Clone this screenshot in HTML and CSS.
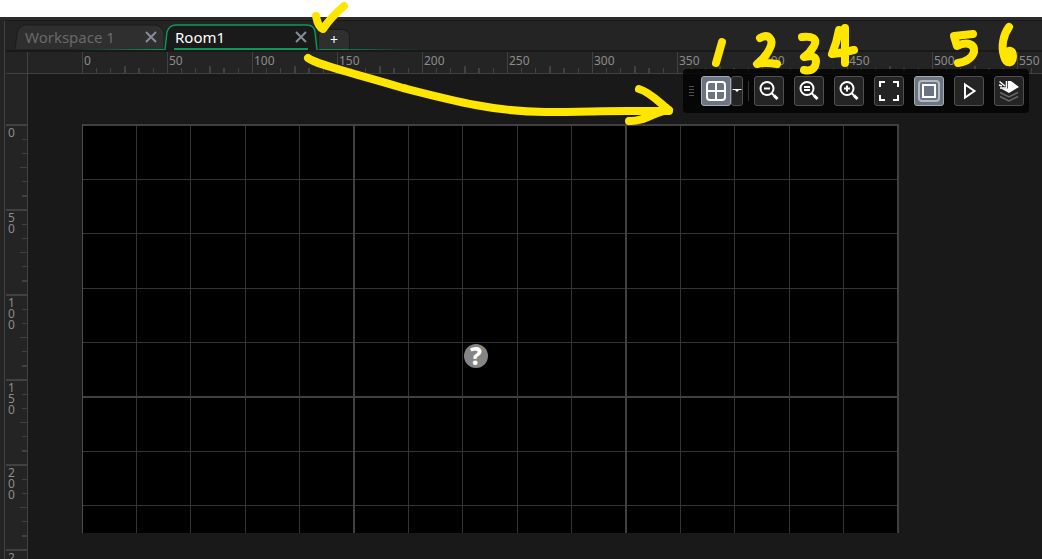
FILE: index.html
```html
<!DOCTYPE html>
<html lang="en">
<head>
<meta charset="utf-8">
<title>Room Editor</title>
<link rel="stylesheet" href="styles.css">
</head>
<body>
<div class="app">
  <div class="dock-edge"></div>
  <main class="workspace">
    <nav class="tabs" aria-label="Open documents">
      <div class="tab tab-idle">
        <svg class="tab-shape" viewBox="0 0 149 26" preserveAspectRatio="none" aria-hidden="true"><defs><linearGradient id="fade"><stop offset="0.4" stop-color="#0a9a58" stop-opacity="0"/><stop offset="1" stop-color="#0a9a58"/></linearGradient></defs><path d="M0 26L2 9Q4 1 11 1H139Q147 1 149 9V26Z" fill="#2f2f2f" stroke="#1a1a1a"/><rect y="25" width="149" height="1" fill="url(#fade)"/></svg>
        <button class="tab-label" type="button">Workspace 1</button>
        <button class="close" type="button" aria-label="Close Workspace 1"><svg viewBox="0 0 12 12"><path d="M1 1L11 11M11 1L1 11"/></svg></button>
      </div>
      <div class="tab tab-active">
        <svg class="tab-shape" viewBox="0 0 154 26" preserveAspectRatio="none" aria-hidden="true"><path d="M1 26L3 8Q5 1 12 1H143Q150 1 151 8L153 26" fill="#1a1a1a" stroke="#0a9a58" stroke-width="1.4"/><path d="M10 25H144" stroke="#0a9a58" stroke-width="2"/></svg>
        <button class="tab-label" type="button">Room1</button>
        <button class="close" type="button" aria-label="Close Room1"><svg viewBox="0 0 12 12"><path d="M1 1L11 11M11 1L1 11"/></svg></button>
      </div>
      <button class="add" type="button" aria-label="New workspace">+</button>
      <div class="tab-line"></div>
    </nav>
    <div class="ruler-top">
      <div class="ruler-corner"></div>
      <div class="ruler-x"><span>0</span><span>50</span><span>100</span><span>150</span><span>200</span><span>250</span><span>300</span><span>350</span><span>400</span><span>450</span><span>500</span><span>550</span></div>
    </div>
    <div class="stage">
      <div class="ruler-y"><span>0</span><span>50</span><span>100</span><span>150</span><span>200</span><span>250</span></div>
      <div class="room">
        <svg class="grid" viewBox="0 0 817 409" shape-rendering="crispEdges" role="img" aria-label="Room grid">
          <rect width="817" height="409" fill="#000"/>
          <path stroke="#343434" d="M54.5 0V409M108.5 0V409M163.5 0V409M217.5 0V409M326.5 0V409M380.5 0V409M435.5 0V409M489.5 0V409M598.5 0V409M652.5 0V409M707.5 0V409M761.5 0V409M0 55.5H817M0 109.5H817M0 164.5H817M0 218.5H817M0 327.5H817M0 381.5H817"/>
          <path stroke="#404040" stroke-width="2" d="M272 0V409M544 0V409M816 0V409M0 1H817M0 273H817"/>
          <path stroke="#4c4c4c" d="M.5 0V409"/>
        </svg>
        <span class="instance">?</span>
      </div>
    </div>
    <div class="toolbar" role="toolbar" aria-label="Room tools">
      <div class="grip"></div>
      <div class="split">
        <button class="tool on" type="button" aria-label="Toggle grid"><svg viewBox="0 0 30 30"><rect x="6" y="6" width="18" height="18" rx="3"/><path d="M15 6V24M6 15H24"/></svg></button>
        <button class="tool more" type="button" aria-label="Grid options"><svg viewBox="0 0 12 30"><path d="M1.500 13.500H10.500" stroke-width="1"/><path d="M3 13H9L6 16Z" fill="#fff" stroke="none"/></svg></button>
      </div>
      <div class="divider"></div>
      <div class="tools">
        <button class="tool" type="button" aria-label="Zoom out"><svg viewBox="0 0 30 30"><circle cx="13" cy="12.5" r="6.5"/><path d="M10 12.5H16M17.5 17L20 19.5"/><path d="M20 19.5L23.5 23" stroke-width="3"/></svg></button>
        <button class="tool" type="button" aria-label="Reset zoom"><svg viewBox="0 0 30 30"><circle cx="13" cy="12.5" r="6.5"/><path d="M10 11H16M10 14H16M17.5 17L20 19.5"/><path d="M20 19.5L23.5 23" stroke-width="3"/></svg></button>
        <button class="tool" type="button" aria-label="Zoom in"><svg viewBox="0 0 30 30"><circle cx="13" cy="12.5" r="6.5"/><path d="M10 12.5H16M13 9.5V15.5M17.5 17L20 19.5"/><path d="M20 19.5L23.5 23" stroke-width="3"/></svg></button>
        <button class="tool" type="button" aria-label="Fit to view"><svg viewBox="0 0 30 30" stroke-width="1.5"><path d="M11 6H6V11M19 6H24V11M6 19V24H11M24 19V24H19"/></svg></button>
        <button class="tool on" type="button" aria-label="Show frame"><svg viewBox="0 0 30 30"><rect x="5" y="5" width="20" height="20" rx="3" stroke="#b4bac4"/><rect x="9" y="9" width="12" height="12"/></svg></button>
        <button class="tool" type="button" aria-label="Play"><svg viewBox="0 0 30 30"><path d="M11 8.500L20.500 15L11 21.500Z"/></svg></button>
        <button class="tool" type="button" aria-label="Layers"><svg viewBox="0 0 30 30"><path d="M6 16.500L15 21L24 16.500M6 20.500L15 25L24 20.500" stroke="#686868" stroke-width="1.5"/><path d="M14 5L17 5L25 11L15 17L7 12.500L14 12.500Z" fill="#fff" stroke="none"/><path d="M5.500 5.500L11 10M12.500 5V12H6M5 9L8 10" stroke-width="1.5"/></svg></button>
      </div>
    </div>
  </main>
</div>
<svg class="marks" viewBox="0 0 1042 130" role="img" aria-label="Handwritten notes: an arrow to the toolbar, numbered 1 to 6">
  <path d="M316 16Q318 27 323 29Q331 17 344 6"/>
  <path d="M308 58C317 65 350 72 403 88C450 100 495 112 545 112C580 112 600 111 627 111H669M639 89C650 92 660 103 669 110C655 111 645 122 629 121"/>
  <path d="M722 42L716 63"/>
  <path d="M760 38C769 33 774 40 770 48C767 55 762 60 757 64Q765 62 777 64"/>
  <path d="M802 37C812 36 818 38 814 46Q810 53 804 57C817 54 817 60 815 66Q812 72 804 70"/>
  <path d="M839 30Q837 42 832 54Q842 53 854 50M845 28V63"/>
  <path d="M973 34L954 36L957 46C967 41 975 44 974 52Q971 61 958 63"/>
  <path d="M1009 27C1003 35 1001 47 1004 56C1006 64 1013 65 1013 56C1013 48 1006 50 1006 56"/>
</svg>
</body>
</html>
```
FILE: styles.css
```css
* { box-sizing: border-box; }
body {
  margin: 0;
  padding-top: 17px;
  height: 100vh;
  background: #fff;
  font-family: "Noto Sans", sans-serif;
  overflow: hidden;
  position: relative;
}
button { font: inherit; margin: 0; padding: 0; border: 0; background: none; color: inherit; }
.app {
  display: flex;
  height: 100%;
  background: #242424;
  border-top: 3px solid #2b2b2b;
  overflow: hidden;
}
.dock-edge { flex: none; width: 5px; margin-top: 1px; border-right: 1px solid #414141; }
.workspace {
  flex: 1;
  min-width: 0;
  display: flex;
  flex-direction: column;
  position: relative;
  border-top: 1px solid #191919;
  border-left: 1px solid #242424;
}
.tabs {
  flex: none;
  display: flex;
  align-items: flex-end;
  height: 31px;
  padding-left: 9px;
  border-bottom: 2px solid #191919;
}
.tab {
  position: relative;
  display: flex;
  align-items: center;
  justify-content: space-between;
  height: 26px;
  font-size: 15px;
}
.tab-idle { width: 149px; padding: 0 7px 0 10px; color: #696969; }
.tab-active { width: 154px; padding: 0 11px 0 11px; color: #fff; }
.tab-shape { position: absolute; left: 0; top: 0; width: 100%; height: 100%; }
.tab-label, .close { position: relative; line-height: 20px; }
.close { width: 12px; height: 12px; }
.close svg { display: block; width: 12px; height: 12px; fill: none; stroke: #858c98; stroke-width: 2; }
.add {
  width: 32px;
  height: 21px;
  border-radius: 7px 7px 0 0;
  background: #2f2f2f;
  border: 1px solid #1a1a1a;
  border-bottom: 1px solid #0a8a50;
  color: #fff;
  font-size: 14px;
  line-height: 16px;
}
.tab-line { width: 70px; height: 1px; background: linear-gradient(90deg, #0a7a48, #242424); }
.ruler-top {
  flex: none;
  display: flex;
  height: 22px;
  border-bottom: 1px solid #414141;
  overflow: hidden;
}
.ruler-corner { flex: none; width: 22px; margin-right: 54px; border-right: 1px solid #414141; }
.ruler-x { display: flex; color: #8c8c8c; font-size: 12px; line-height: 17px; }
.ruler-x span {
  flex: none;
  width: 85px;
  padding-left: 1px;
  border-left: 1px solid #414141;
  background:
    linear-gradient(#414141, #414141) 13px 100% / 1px 5px,
    linear-gradient(#414141, #414141) 27px 100% / 1px 5px,
    linear-gradient(#414141, #414141) 41px 100% / 2px 7px,
    linear-gradient(#414141, #414141) 55px 100% / 2px 5px,
    linear-gradient(#414141, #414141) 70px 100% / 1px 5px;
  background-repeat: no-repeat;
}
.stage { flex: 1; min-height: 0; display: flex; background: #191919; overflow: hidden; }
.ruler-y {
  flex: none;
  width: 22px;
  padding-top: 50px;
  background: #242424;
  border-right: 1px solid #414141;
  color: #8c8c8c;
  font-size: 12px;
  line-height: 11px;
}
.ruler-y span {
  display: block;
  height: 85px;
  padding: 1px 11px 0 2px;
  border-top: 2px solid #414141;
  word-break: break-all;
  background:
    linear-gradient(#414141, #414141) 100% 13px / 5px 1px,
    linear-gradient(#414141, #414141) 100% 27px / 5px 1px,
    linear-gradient(#414141, #414141) 100% 41px / 7px 1px,
    linear-gradient(#414141, #414141) 100% 55px / 5px 1px,
    linear-gradient(#414141, #414141) 100% 69px / 5px 2px;
  background-repeat: no-repeat;
}
.room { position: relative; flex: none; margin: 50px 0 0 54px; }
.grid { display: block; width: 817px; height: 409px; }
.instance {
  position: absolute;
  left: 382px;
  top: 220px;
  width: 24px;
  height: 24px;
  border-radius: 50%;
  background: #858585;
  color: #fff;
  font-size: 24px;
  font-weight: 800;
  line-height: 23px;
  text-align: center;
}
.toolbar {
  position: absolute;
  top: 48px;
  right: 13px;
  display: flex;
  align-items: center;
  height: 44px;
  padding: 0 5px 0 6px;
  border-radius: 4px;
  background: rgba(4, 4, 4, 0.85);
}
.grip { width: 5px; height: 11px; margin-right: 7px; background: repeating-linear-gradient(#505050 0 1px, transparent 1px 3px); }
.split { display: flex; }
.divider { width: 1px; height: 20px; margin: 0 5px; background: #333; }
.tools { display: flex; gap: 10px; }
.tool { width: 30px; height: 30px; border: 1px solid #505050; border-radius: 3px; background: #242424; }
.tool svg { display: block; width: 30px; height: 30px; margin: -1px; fill: none; stroke: #fff; stroke-width: 2; }
.on { background: #6c7482; border-color: #a5abb5; }
.more { width: 12px; }
.more svg { width: 12px; }
.marks { position: absolute; left: 0; top: 0; width: 1042px; height: 130px; pointer-events: none; fill: none; stroke: #ffe600; stroke-width: 8; stroke-linecap: round; stroke-linejoin: round; }
```
